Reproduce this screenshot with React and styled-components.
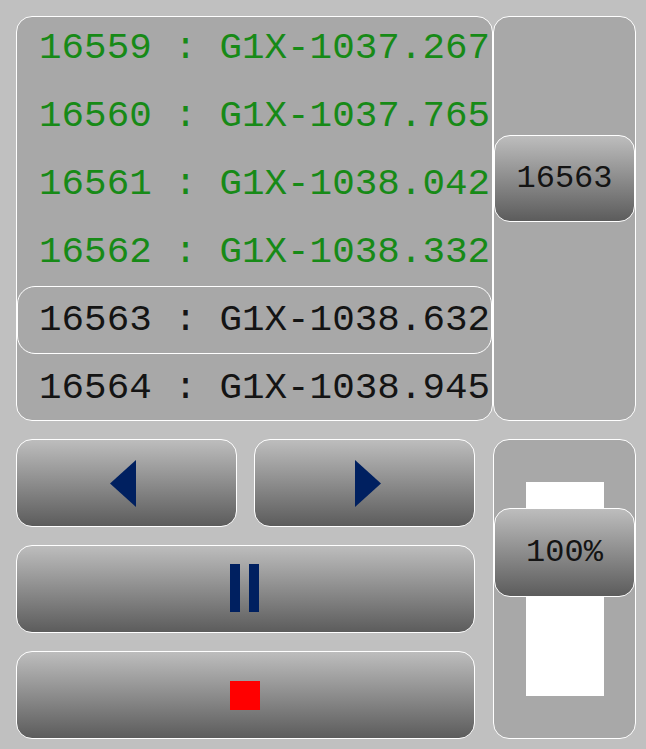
import React from 'react';
import styled, { createGlobalStyle } from 'styled-components';

const rows = [
    { id: 16559, pos: 'G1X-1037.267', done: true },
    { id: 16560, pos: 'G1X-1037.765', done: true },
    { id: 16561, pos: 'G1X-1038.042', done: true },
    { id: 16562, pos: 'G1X-1038.332', done: true },
    { id: 16563, pos: 'G1X-1038.632', current: true },
    { id: 16564, pos: 'G1X-1038.945' },
];

const App = () => {
    return (
        <Page>
            <GlobalStyle />
            <Top>
                <ListPanel>
                    <Rows>
                        {rows.map((r) => (
                            <Row key={r.id} $done={r.done} $current={r.current}>
                                {r.id} : {r.pos}
                            </Row>
                        ))}
                    </Rows>
                </ListPanel>
                <ScrollPanel>
                    <Thumb $top={118} $height={87}>16563</Thumb>
                </ScrollPanel>
            </Top>
            <Bottom>
                <Buttons>
                    <Button>
                        <svg width="26" height="47" viewBox="0 0 26 47" style={{ marginLeft: -7 }}>
                            <polygon points="26,0 26,47 0,23.5" fill="#002060" />
                        </svg>
                    </Button>
                    <Button>
                        <svg width="26" height="47" viewBox="0 0 26 47" style={{ marginLeft: 7 }}>
                            <polygon points="0,0 0,47 26,23.5" fill="#002060" />
                        </svg>
                    </Button>
                    <Button $wide>
                        <svg width="30" height="48" viewBox="0 0 30 48" style={{ marginLeft: -2, marginTop: -2 }}>
                            <rect x="0" y="0" width="10" height="48" fill="#002060" />
                            <rect x="19" y="0" width="10" height="48" fill="#002060" />
                        </svg>
                    </Button>
                    <Button $wide>
                        <StopMark />
                    </Button>
                </Buttons>
                <ZoomPanel>
                    <Track />
                    <Thumb $top={68} $height={89}>100%</Thumb>
                </ZoomPanel>
            </Bottom>
        </Page>
    );
};

export default App;

const GlobalStyle = createGlobalStyle`
    html, body {
        margin: 0;
        padding: 0;
        background: #c0c0c0;
    }
    * {
        box-sizing: border-box;
    }
`;

const Page = styled.div`
    width: 646px;
    height: 749px;
    padding: 16px 10px 10px 16px;
    display: flex;
    flex-direction: column;
    gap: 18px;
    font-family: "Liberation Mono", "Courier New", monospace;
`;

const Top = styled.div`
    display: grid;
    grid-template-columns: 477px 143px;
    height: 405px;
`;

const Panel = styled.div`
    background: #a8a8a8;
    border: 1px solid #ffffff;
    border-radius: 16px;
`;

const ListPanel = styled(Panel)`
    overflow: hidden;
`;

const Rows = styled.div`
    margin-top: -3px;
    display: flex;
    flex-direction: column;
`;

const Row = styled.div`
    height: 68px;
    flex: 0 0 68px;
    display: flex;
    align-items: center;
    padding-left: 21px;
    font-size: 37.6px;
    white-space: nowrap;
    color: ${(p) => (p.$done ? '#178a17' : '#141414')};
    border: 1px solid ${(p) => (p.$current ? '#ffffff' : 'transparent')};
    border-radius: 18px;
`;

const ScrollPanel = styled(Panel)`
    position: relative;
`;

const Thumb = styled.div`
    position: absolute;
    left: 0;
    right: 0;
    top: ${(p) => p.$top}px;
    height: ${(p) => p.$height}px;
    border: 1px solid #ffffff;
    border-radius: 16px;
    background: linear-gradient(to bottom, #bdbdbd, #5c5c5c);
    display: flex;
    align-items: center;
    justify-content: center;
    font-size: 32px;
    color: #141414;
`;

const Bottom = styled.div`
    display: grid;
    grid-template-columns: 459px 143px;
    column-gap: 18px;
    height: 300px;
`;

const Buttons = styled.div`
    display: grid;
    grid-template-columns: 221px 221px;
    grid-template-rows: 88px 88px 88px;
    column-gap: 17px;
    row-gap: 18px;
`;

const Button = styled.div`
    grid-column: ${(p) => (p.$wide ? '1 / 3' : 'auto')};
    border: 1px solid #ffffff;
    border-radius: 16px;
    background: linear-gradient(to bottom, #bdbdbd, #5c5c5c);
    display: flex;
    align-items: center;
    justify-content: center;
`;

const StopMark = styled.div`
    width: 30px;
    height: 29px;
    background: #ff0000;
    margin-left: -2px;
`;

const ZoomPanel = styled(Panel)`
    position: relative;
    display: flex;
    align-items: center;
    justify-content: center;
`;

const Track = styled.div`
    width: 78px;
    height: 214px;
    background: #ffffff;
`;
